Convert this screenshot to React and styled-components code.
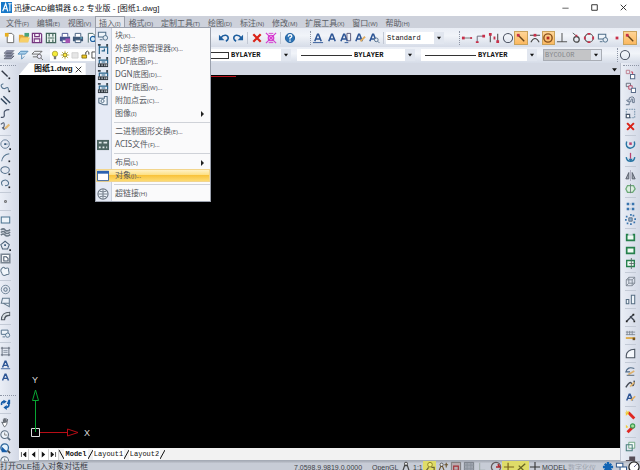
import React from "react";
import styled, { createGlobalStyle, css } from "styled-components";

const Global = createGlobalStyle`
  *, *::before, *::after { box-sizing: border-box; }
  html, body, #root { height: 100%; margin: 0; }
  body {
    overflow: hidden;
    font-family: "Liberation Sans", "Noto Sans CJK SC", sans-serif;
    font-size: 8px;
    color: #3c3f47;
  }
  button, select { font: inherit; color: inherit; border: 0; padding: 0; margin: 0; background: none; }
  svg { display: block; flex: none; }
`;

/* ---------- icon drawings, all on a 13 x 13 grid ---------- */
const N = "#4a5568";
const B = "#1f5f9f";
const R = "#c8304a";
const Y = "#e8b020";
const p = (d, stroke = N, w = 1, fill = "none") => (
  <path d={d} stroke={stroke} strokeWidth={w} fill={fill} />
);
const f = (d, fill) => <path d={d} fill={fill} />;
const c = (x, y, r, stroke = N, fill = "none", w = 1) => (
  <circle cx={x} cy={y} r={r} stroke={stroke} fill={fill} strokeWidth={w} />
);
const dot = (x = 10, y = 10) => f(`M${x - 1} ${y - 1}h2v2h-2z`, "#20242c");
const letterA = (x = 0) => p(`M${3 + x} 10L${6 + x} 2.5h1L${10 + x} 10M${4 + x} 7.5h5`, "#2d5595", 1.7);
const refBox = <>{p("M2.5 12V4.500H6M2.500 2v3M5.500 4.500h6V12M5 8.500h3V6", "#27648c", 1.3)}{f("M1 1h3v2H1zM10 1h2v3h-2z", "#3a4650")}</>;
const dwgRef = <>{p("M2.500 8V4.500H11.500V8M5 6.500h4", "#27648c", 1.3)}{f("M1 1h3v2H1zM10 1h2v3h-2z", "#3a4650")}{f("M1 8h11v4H1z", "#303840")}{p("M2.5 9v2M5.5 9v2M8.5 9v2M10.5 9v2", "#e6eaf0")}</>;
const blockIcon = <>{p("M1.500 2.500h8v5h-8z", "#4d6c88", 1.1, "#eef4fa")}{p("M3 10.500h3", "#4d6c88")}{c(9, 8.5, 2.5, "#4d6c88", "#e2ebf4")}</>;

const drawings = {
  logo: <>{f("M0 0h13v13H0z", "#1677c8")}{p("M2 11L5.5 2L8 11M3 8h4", "#fff", 1.4)}{p("M10.5 2v9M8.5 2h4", "#fff", 1.2)}</>,
  file: <>{p("M3.5 1.5h5l2 2v8h-7z", "#666", 1, "#fff")}{f("M1 1h4v4H1z", Y)}</>,
  open: <>{f("M1 3h4l1 1h5v7H1z", "#e4a83a")}{f("M3 6h10l-2 5H1z", "#f6cf68")}{f("M7 1h5v4H7z", "#48a37b")}</>,
  save: <>{p("M1.5 1.5h9l1 1v9h-10z", "#74357f", 1.3, "#f5eef8")}{p("M4 2v3h5V2M3.5 11V7.5h6V11", "#74357f", 1.2)}</>,
  saveAll: <>{p("M1.5 1.5h10v10h-10z", "#44685d", 1.3, "#eaf2ee")}{p("M3 6.5h7M4.5 2v3M8.5 2v3M4.5 8v3M8.5 8v3", "#44685d", 1.3)}</>,
  print: <>{f("M1 5h11v5H1z", "#405a78")}{p("M3.5 5V1.5h6V5M3.5 8.5h6v3h-6z", "#405a78", 1, "#fff")}{f("M9 6h2v1H9z", "#7de")}</>,
  plot: <>{f("M1 5h11v5H1z", "#44518d")}{p("M3.5 5V1.5h6V5M3.5 8.5h6v3h-6z", "#44518d", 1, "#fff")}{f("M7 7h5v5H7z", "#a354b1")}</>,
  preview: <>{p("M2.5 11.5v-10h5l2 2v2", "#466", 1, "#fff")}{c(7.5, 7.5, 2.8, B, "#d8edfa", 1.3)}{p("M9.5 9.5l3 3", B, 1.8)}</>,
  undo: <>{p("M3 6.5C6 2 11.500 3 11 7Q10.500 9 8.500 10", B, 1.8)}{f("M1 3v6h6z", B)}</>,
  redo: <>{p("M10 6.500C7 2 1.500 3 2 7Q2.500 9 4.500 10", B, 1.8)}{f("M12 3v6H6z", B)}</>,
  cross: p("M2.500 2.500l8 8M10.500 2.500l-8 8", "#d92318", 2.4),
  purge: <>{c(6.5, 6.5, 3, "#d43ccf", "#f2b4f0", 1.3)}{p("M1 1l11 11M12 1L1 12", "#d43ccf", 1.3)}{p("M4 1.500h5M4 11.500h5", "#d43ccf")}</>,
  help: <>{c(6.5, 6.5, 5, "#215f9c", "#2c73b5", 1)}{p("M4.500 5Q5 3 6.500 3Q8.500 3 8.500 4.500Q8.500 5.500 6.500 6.500V8M6.500 9v1.500", "#fff", 1.4)}</>,
  aUnder: <>{letterA()}{p("M1 11.500h11", "#2d5595")}</>,
  a: letterA(),
  aDoc: <>{letterA(-2)}{p("M7.500 8.500v-7h4v8h-3", "#557", 1)}{p("M5 11.500h4", "#2d5595")}</>,
  aEdit: <>{letterA(-1)}{p("M7 10l5-5", "#e0ad62", 2)}</>,
  aFind: <>{letterA(-1)}{c(9, 8.5, 2, "#55708c", "#e7edf5")}{p("M10.500 10l2 2", "#55708c")}</>,
  endSnap: <>{p("M2 6.500h9", "#777")}{f("M1 5h3v3H1z", R)}{f("M10 5.500h2v2h-2z", R)}</>,
  midSnap: <>{p("M3.500 11V4.500H10", "#667")}{f("M9 3h3v3H9zM2 10h3v2H2z", R)}</>,
  twoSnap: <>{p("M2.500 2v9M10.500 2v9", "#555", 1.2)}{f("M1 1h3v3H1zM9 9h3v3H9zM6 5h2v3H6z", R)}</>,
  circle: c(6.5, 6.5, 5, "#4c5363", "none", 1.1),
  nearSnap: <>{p("M3 3l7 7", "#63431a", 1.5)}{f("M2 2h3v3H2z", R)}</>,
  crossSnap: <>{p("M1 3.500h11M2 11Q6.500 3 11 11", "#444", 1.2)}{f("M5 2h3v3H5z", R)}</>,
  centerSnap: <>{c(6.5, 6.5, 4.5, "#87501c", "none", 1.5)}{f("M5 5h3v3H5z", "#b52c22")}</>,
  perp: p("M6.500 1v10M1 10.500h11", "#555", 1.1),
  tangent: <>{c(7, 8, 3, "#444", "none", 1.3)}{p("M3 1l6 5", "#555")}{f("M6 3h2v2H6z", R)}</>,
  quad: <>{c(6.5, 6.5, 4.5, "#555", "none", 1.1)}{f("M5 1h3v2H5zM5 10h3v2H5zM1 5h2v3H1zM10 5h2v3h-2z", R)}</>,
  insert: blockIcon,
  point: f("M5 5h3v3H5z", R),
  layers: <>{f("M4 1h8l-3 3H1zM4 4h8l-3 3H1zM4 7h8l-3 3H1z", "#8a8ea4")}{p("M1 4.500h8l3-3M1 7.500h8l3-3M1 10.500h8l3-3", "#515768")}</>,
  layerBlue: <>{f("M4 2h8L9 6H1z", "#acd3ee")}{p("M4 2.500h8l-3 3H1zM5 6v5l3-3", "#5b8fb8")}</>,
  layerFind: <>{p("M4 2.500h8l-3 3H1zM2 8.500h5", "#666")}{c(9, 8, 2.3, "#666", "#eef")}{p("M11 10l2 2", "#666")}</>,
  bulb: <>{c(6.5, 5, 3.5, "#a49c28", "#f5ec3a")}{f("M5 8h3v4H5z", "#777")}</>,
  sun: <>{p("M6.500 1v11M1 6.500h11M2.500 2.500l8 8M10.500 2.500l-8 8", "#b4a728")}{c(6.5, 6.5, 2.5, "#777020", "#ffe83e")}</>,
  sheet: p("M2.500 3.500h8v7h-8z", "#ccc", 1, "#e6e6e6"),
  unlock: <>{p("M7.500 6V3Q10 0 11.500 3v3", "#333", 1.2)}{p("M2.500 6.500h6v4h-6z", "#75620a", 1, "#f0ca29")}</>,
  swatch: p("M2.500 2.500h8v8h-8z", "#222", 1, "#fff"),
  line: <>{p("M2 2l7 7", "#353b48", 1.7)}{dot(11, 11)}</>,
  arc: <>{p("M4 2Q0 3 2 6T7 7T10 10", "#567590", 1.3)}{dot(11, 11)}</>,
  mline: p("M1 4l7 7M4 1.500l8 8", "#34485f", 1.7),
  spline: p("M1 11Q6 12 5 7T11 2", "#465269", 1.4),
  sketch: <>{p("M1 4Q5 0 5 4T3 8Q5 12 9 6", "#465269", 1.2)}{p("M6 9l5-5", "#e3b874", 2.5)}</>,
  circ: <>{c(6, 6, 5, "#55708c")}{p("M6 6h3", "#55708c")}{f("M5 5h2v2H5z", "#357")}{dot(12, 12)}</>,
  curve: <>{p("M2 11Q3 3 11 2", "#567590", 1.2)}{dot(11, 11)}</>,
  ellipse: <><ellipse cx="6" cy="6" rx="5" ry="4" stroke="#55708c" fill="none" strokeWidth="1.200" />{dot(11, 11)}</>,
  earc: <>{p("M3 9Q0 5 4 3T10 5Q11 9 6 9", "#567590", 1.3)}{dot(11, 11)}</>,
  pt: p("M5.500 5.500h2v2h-2z", "#555"),
  rect: p("M1.500 3.500h10v7h-10z", "#4a7390", 1.2, "#edf4fa"),
  hatch: p("M1 3.500Q4 1 6 3.500T12 3M1 6.500Q4 4 6 6.500T12 6M1 9.500Q4 7 6 9.500T12 9", "#6b7885", 1.9),
  polygon: <>{p("M6 1.500l5 4-2 5H3l-2-5z", "#4c6278", 1.2)}{f("M5 5h2v2H5z", "#357")}{dot(12, 12)}</>,
  region: <>{p("M1.500 1.500h10v10h-10z", "#7a8592", 2, "#fff")}{p("M4.500 9.500V4.500h3l2 2v3z", "#44546a", 1.2)}</>,
  cloud: p("M2 3Q5 0 6 3Q11 1 10 5Q12 11 8 10Q3 13 2 8Q0 5 2 3z", "#63798d", 1.2, "#f1f6fb"),
  donut: <>{c(6.5, 6.5, 5, "#63798d")}{c(6.5, 6.5, 2, "#63798d", "none", 1.2)}</>,
  wedge: p("M3 1.500h8v6H1.500zM4 7.500l7 4v-4", "#63798d", 1.2, "#e8eff7"),
  elbow: <>{p("M3.500 12Q3.500 4.500 12 4.500", "#4d565f", 5)}{p("M3.500 11Q3.500 4.500 11 4.500", "#d9dfe4", 2.5)}</>,
  dotsBox: <>{p("M1 2.500h11M1 10.500h11M2.500 1v11M10.500 1v11", "#56606e")}{p("M4 5.500h5M4 7.500h5", "#7f8a98", 1)}</>,
  refresh: <>{p("M2 7Q1 3 5 3M10 5Q12 9 7 10", "#145ba8", 2)}{f("M4 1l4 2-4 3zM8 7l-4 3 4 3zM10 1h2v5H8z", "#145ba8")}</>,
  hand: p("M2 6l2 1V3l1 4V1.500l1 5 1-5v5l2-4-1 6-2 3H5z", "#5c626b", 1, "#fff"),
  zoom: <>{c(5.5, 5.5, 4.5, "#5b6d7f", "#eef4fa", 1.2)}{p("M9 9l3 3", "#5b6d7f", 2)}{p("M5.500 3v3h3", "#777")}</>,
  zoomBlue: <>{c(5.5, 5.5, 4.5, "#2d669b", "#e6f3fc", 1.5)}{p("M9 9l3 3", "#444", 1.8)}{f("M2 4l7 7H2z", "#145ba8")}</>,
  copy: <>{p("M1.500 1.500h4v4h-4z", "#ba7182")}{p("M6.500 6.500h5v5h-5z", "#596c89", 1.2, "#fff")}{p("M7 3.500h2V6", R)}</>,
  copy2: <>{p("M1.500 1.500h5v4h-5z", "#59606f")}{p("M4.500 4.500h4v4h-4z", "#b9425c", 1.1, "#eef")}{p("M7.500 7.500h5v5h-5z", "#596c89", 1.2, "#fff")}</>,
  offset: p("M1 11.500h4V8Q2 8 2 6H5V3.500Q11 0 11 6v3H9V5Q8 3 7 6v2H5", "#63738a", 1.1),
  scale: <><path d="M1.500 1.500h10v10h-10z" stroke="#6686a0" fill="none" strokeDasharray="2 1" />{p("M1.500 7.500h4v4h-4z", "#475569", 1.3, "#fff")}</>,
  rotate: <>{p("M2 3Q0 10 6 11Q13 10 11 3", "#2a76a4", 1.7)}{f("M5 4h3v3H5z", "#b94270")}</>,
  rotate3: <>{p("M1.500 6Q2 11 6.500 11T11.500 6", "#2a76a4", 1.7)}{p("M6.500 1v7", "#b94270", 1.5)}{f("M4 8h5l-2 4z", "#2a76a4")}</>,
  mirror: <>{p("M6.500 0v13", "#aab")}{p("M4.500 3v7.500H1zM8.500 3v7.500H12z", "#59606d", 1.1, "#a3a9b3")}</>,
  recycle: <>{p("M3 3h7l2 4-3 4H3L1 7z", "#6ca978", 1.5, "#dcefe0")}{p("M6.500 1v11", "#677")}</>,
  array: <>{f("M2 2h3v3H2zM8 2h3v3H8zM2 8h3v3H2zM8 8h3v3H8z", "#3974ae")}{f("M6 3h1v1H6zM6 9h1v1H6z", "#9ab")}</>,
  array2: <>{f("M1 2h2v2H1zM9 1h2v2H9zM2 10h2v2H2zM10 9h2v2h-2zM0 6h2v2H0zM11 5h2v2h-2zM6 0h2v2H6zM6 11h2v2H6z", "#3974ae")}{p("M4.500 4.500h4v4h-4z", "#567", 1, "#8fb2d4")}</>,
  green: p("M2 3h9v7H2z", "#25804c", 2, "#effaf3"),
  greenCut: <>{p("M2 3h9v7H2z", "#25804c", 1.6, "#effaf3")}{p("M7.500 0v13M5 6.500h7", "#566")}</>,
  greenTop: <>{p("M4 3H2v7h9V3H9", "#25804c", 2, "#effaf3")}{p("M4 3.500h5", "#9ab")}</>,
  cube: p("M1.500 4.500h7v7h-7zM4.500 1.500h7v7h-7zM1.500 4.500l3-3M8.500 4.500l3-3M8.500 11.500l3-3M1.500 11.500l3-3", "#79828e", 1),
  stretch: p("M1.500 6.500h3v5h-3zM7.500 1.500h4v10h-4z", "#566d82", 1.2, "#eff5fa"),
  extend: <>{p("M2 11l8-8M6 5l5 5", "#3d4450", 1.6)}{f("M9 2h2v2H9zM10 10h2v2h-2zM1 10h2v2H1z", "#222")}</>,
  measure: <>{p("M1 2.500h11M1 5.500h11M2.500 1v5M5.500 1v5M8.500 1v5", "#7a8490")}{p("M1 9.500h11", "#dca63c", 2)}{f("M9 9h3v3H9z", "#735322")}</>,
  chamfer: p("M1.500 11.500V9Q2 2 11.500 1.500v10z", "#4c5562", 1.3, "#f5f8fc"),
  brush1: <>{p("M11 3Q3 0 1 7h5", "#4e6884", 1.3)}{p("M4 10l7-4", "#ddb16e", 2)}{p("M2 11h9", "#456")}</>,
  brush2: <>{p("M1 10Q6 1 8 6T11 2", "#454b56", 1.7)}{p("M6 9l5-5", "#e3b874", 2)}</>,
  wand: <>{p("M4 3l7 7", "#df2721", 3.4)}{f("M1 0l2 2 2-1-1 3 1 2-2-1-2 2V4L0 3h2z", "#efca35")}</>,
  wand2: <>{p("M10 4l-7 7", "#df2721", 3.4)}{c(9, 3.5, 2.5, "#409c56", "#a5df9a", 1.4)}{f("M1 2l3 3-3 1z", "#efca35")}</>,
  overlap: <>{p("M4.500 1.500h7v7h-7z", "#619f77", 1, "#f5fbf7")}{p("M1.500 4.500h7v7h-7z", "#487c7c", 1.2)}</>,
  solid: f("M5 3h7v8H1V7h4z", "#564d56"),
  block: blockIcon,
  xref: refBox,
  pdf: dwgRef,
  cloudPts: <>{p("M2 3.500h6v-2h3v9H7l-5-2z", "#536c84", 1.1, "#eef4fa")}{c(6, 6.5, 1.7, "#536c84")}</>,
  acis: <>{f("M0 1h13v11H0z", "#4d6562")}{f("M2 3h3v2H2zM7 3h4v2H7zM2 8h2v2H2zM6 8h2v2H6zM10 8h1v2h-1z", "#e1e9e9")}</>,
  windowIcon: <>{p("M.5 1.500h12v10H.5z", "#315c9c", 1, "#fff")}{f("M0 1h13v3H0z", "#2b62b0")}</>,
  globe: <>{c(6.5, 6.5, 5.5, "#6c7784", "#eef4fb", 1.2)}{p("M1.500 6.500h10M6.500 1.500v10M3 3.500Q6.500 5 10 3.500M3 9.500Q6.500 8 10 9.500", "#6c7784")}</>,
  person: <>{c(6.5, 3, 1.7, "#444", "#eee")}{p("M3 11l2-6h3l2 6", "#444", 1.3)}</>,
  personHot: <>{c(6.5, 4, 2.5, "#8a8024", "#f0ec7a")}{p("M2 11l3-4M8 7h3v4", "#6a6432", 1.3)}</>,
  personPlus: <>{c(5, 4, 1.7, "#555", "#eee")}{p("M2 11l2-5h2l2 5M8 4h4M10 2v5", "#6a532d", 1.2)}</>,
  snap: <>{p("M1.500 1.500h10v10h-10z", "#777", 1, "#b9aaae")}{p("M4 5.500h5V10H4z", "#a22e35", 1.2)}</>,
  grid: <>{p("M1.500 1.500h10v10h-10z", "#777d86", 1, "#a0a6b0")}{p("M1 4.500h11M1 8.500h11M4.500 2v10M8.500 2v10", "#8b929c")}</>,
  ortho: p("M4 2v8h6", "#9aa7a3", 1),
  polar: <>{c(6.5, 6.5, 5, "#655b5d", "none", 1.4)}{p("M6.500 6.500h4l-2-3", "#af252c", 1.6)}</>,
  osnap: p("M1 6.500h11M5.500 2v10", "#79641d", 1.3),
  otrack: p("M2 10l8-7M3 5l5 5", "#676424", 1.4),
  plus: p("M1 6.500h11M6.500 1v11", "#333", 1.2),
  gear: <>{p("M6.500 1v11M1 6.500h11M3 3l7 7M10 3l-7 7", "#1365b4", 2.6)}{c(6.5, 6.5, 3, "#1365b4", "#1365b4")}</>,
  windows: p("M1.500 2.500h7v4h-7zM5.500 6.500h7v4h-7z", "#2f5687", 1.1, "#fff"),
  clock: <>{c(6.5, 6.5, 5.5, "#222", "#fff", 1.3)}{p("M6.500 6.500l3-3", "#557")}</>,
  first: p("M3.500 3v7M10 3L6 6.500 10 10z", "#111", 1, "#111"),
  prev: f("M9 2L4 6.500 9 11z", "#111"),
  next: f("M4 2l5 4.500L4 11z", "#111"),
  last: p("M9.500 3v7M3 3l4 3.500L3 10z", "#111", 1, "#111"),
  minimize: p("M2 7.500h9", "#222"),
  maximize: p("M2.500 2.500h8v8h-8z", "#222", 1.3),
  close: p("M2.500 2.500l8 8M10.500 2.500l-8 8", "#222", 1.3),
  down: f("M2 4h9L6.500 10z", "#111"),
};

const Icon = ({ name, size = 13 }) => (
  <svg width={size} height={size} viewBox="0 0 13 13" aria-hidden="true">{drawings[name]}</svg>
);

/* ---------- shell ---------- */
const uiFont = css`font-family: "Noto Sans", "Noto Sans CJK SC", sans-serif;`;

const Shell = styled.div`
  display: grid;
  grid-template-rows: 16px 12px 19px 16px minmax(0, 1fr) 9px;
  height: 100vh;
  background: #d5dae5;
  overflow: hidden;
`;
const TitleBar = styled.header`
  display: flex;
  align-items: center;
  padding: 0 3px 2px 1px;
  gap: 2px;
  background: #fff;
  color: #15171b;
`;
const Title = styled.h1`
  flex: 1;
  margin: 0;
  font-size: 8px;
  font-weight: 400;
`;
const WindowButton = styled.button`
  display: grid;
  place-items: center;
  width: 27px;
  height: 13px;
`;
const MenuBar = styled.nav`
  ${uiFont}
  display: flex;
  padding-left: 2px;
  background: #cdd1db;
  color: #5a5d65;
`;
const MenuEntry = styled.div`
  position: relative;
  display: flex;
`;
const MenuButton = styled.button`
  padding: 0 3px;
  line-height: 11px;
  white-space: nowrap;
  border: 1px solid transparent;
  border-width: 1px 1px 0;
  ${(q) => q.$open && css`background: #e2e4ea; border-color: #9b9fa9;`}
`;
const Key = styled.span`
  font-size: 6px;
`;
const Dropdown = styled.ul`
  position: absolute;
  z-index: 5;
  top: 11px;
  left: 0;
  width: 116px;
  margin: 0;
  padding: 1px 0;
  list-style: none;
  border: 1px solid #9ba1ad;
  background: linear-gradient(90deg, #e5eaf5 15px, #c9d0de 15px, #c9d0de 16px, #fafafb 16px);
`;
const MenuRow = styled.button`
  display: grid;
  grid-template-columns: 18px 1fr 9px;
  align-items: center;
  width: 100%;
  height: 13px;
  padding-left: 1px;
  line-height: 12px;
  text-align: left;
  white-space: nowrap;
  color: #55585e;
  ${(q) => q.$hot && css`
    background: linear-gradient(#fff5d2, #fde084 45%, #f9c33c 50%, #fddf7c);
    box-shadow: inset 0 0 0 1px #f2d58c;
  `}
`;
const MenuSeparator = styled.li`
  height: 5px;
  margin-left: 18px;
  background: linear-gradient(transparent 2px, #cfd2d8 2px, #cfd2d8 3px, transparent 3px);
`;
const SubArrow = styled.span`
  border: 3px solid transparent;
  border-left: 3px solid #222;
  border-right: 0;
  width: 3px;
`;

/* ---------- toolbars ---------- */
const Bar = styled.div`
  display: grid;
  grid-template-columns: ${(q) => q.$columns};
  align-items: center;
  min-width: 0;
  background: linear-gradient(#e9edf5, #f1f4f9 40%, #d6dce8);
`;
const Group = styled.div`
  display: flex;
  align-items: center;
  min-width: 0;
  height: 100%;
  padding: 0 ${(q) => q.$right || 0}px 0 ${(q) => q.$left || 0}px;
`;
const Tool = styled.button`
  display: grid;
  place-items: center;
  flex: ${(q) => (q.$fixed ? "0 0 14px" : "1 1 0")};
  min-width: 0;
  height: 14px;
  ${(q) => q.$active && css`background: linear-gradient(#ffd79a, #fbb65c); box-shadow: inset 0 0 0 1px #c9a25c;`}
`;
const Divider = styled.span`
  flex: none;
  width: 1px;
  height: 12px;
  margin: 0 2px;
  background: #c2c8d4;
`;
const Grip = styled.span`
  flex: none;
  width: 0;
  height: 14px;
  border-left: 1px dotted #8d95a5;
`;
const Combo = styled.label`
  display: flex;
  align-items: center;
  min-width: 0;
  height: 12px;
  margin-right: ${(q) => q.$gap || 0}px;
  padding-left: ${(q) => (q.$sample ? 4 : 1)}px;
  background: ${(q) => (q.$disabled ? "#c4c5c7" : "#fff")};
  color: ${(q) => (q.$disabled ? "#85878b" : "#111")};
  ${(q) => q.$disabled && css`border: 1px solid #a9adb5;`}
`;
const Sample = styled.span`
  flex: none;
  width: ${(q) => (q.$swatch ? "20px" : "51px")};
  height: ${(q) => (q.$swatch ? "7px" : "1px")};
  margin-right: 2px;
  border: 1px solid #333;
  border-width: ${(q) => (q.$swatch ? "1px" : "1px 0 0")};
`;
const Select = styled.select`
  flex: 1;
  min-width: 0;
  height: 12px;
  appearance: none;
  font-family: "Liberation Mono", monospace;
  font-size: 7px;
  font-weight: ${(q) => (q.$strong ? 700 : 400)};
  opacity: 1;
`;
const Caret = styled.span`
  display: grid;
  place-items: center;
  flex: none;
  width: 10px;
  height: 100%;
  background: #e1e6ef;
`;
const LayerState = styled.div`
  display: flex;
  align-items: center;
  height: 12px;
  width: 60px;
  margin-left: 6px;
  background: #fff;
`;

/* ---------- workspace ---------- */
const Workspace = styled.div`
  display: grid;
  grid-template-columns: 19px minmax(0, 1fr) 20px;
  min-height: 0;
`;
const Side = styled.aside`
  display: flex;
  flex-direction: column;
  align-items: ${(q) => (q.$right ? "center" : "flex-start")};
  min-height: 0;
  overflow: hidden;
  padding-top: 2px;
  background: linear-gradient(90deg, #eaeef6, #d3d9e6);
  border-left: ${(q) => (q.$right ? "1px solid #bfc5d1" : "0")};
`;
const SideGrip = styled.span`
  flex: none;
  width: 16px;
  height: 3px;
  margin-top: ${(q) => (q.$gap ? "11px" : "0")};
  border-top: 1px dotted #8d95a5;
`;
const SideTool = styled.button`
  flex: none;
  display: grid;
  place-items: center;
  width: 11px;
  height: 13px;
`;
const SideDivider = styled.span`
  flex: none;
  width: 11px;
  height: 5px;
  background: linear-gradient(transparent 2px, #c3cad6 2px, #c3cad6 3px, transparent 3px);
`;
const Document = styled.main`
  display: grid;
  grid-template-rows: 12px minmax(0, 1fr) 13px;
  min-width: 0;
  min-height: 0;
`;
const DocTabs = styled.div`
  display: flex;
  align-items: stretch;
  justify-content: space-between;
  background: #d4d9e4;
`;
const DocTab = styled.div`
  display: flex;
  align-items: center;
  padding: 0 2px 0 15px;
  background: #fff;
  color: #111;
  font-weight: 700;
  line-height: 12px;
  clip-path: polygon(0 100%, 10px 0, 100% 0, 100% 100%);
`;
const TinyButton = styled.button`
  display: grid;
  place-items: center;
  width: 11px;
  height: 12px;
`;
const Canvas = styled.section`
  display: flex;
  flex-direction: column;
  justify-content: space-between;
  min-height: 0;
  background: #000;
  overflow: hidden;
`;
const Sheets = styled.nav`
  display: flex;
  align-items: center;
  background: #f2f2f2;
  border-bottom: 1px solid #a5abb6;
  color: #111;
  font-family: "Liberation Mono", monospace;
  font-size: 7px;
`;
const PageButton = styled.button`
  display: grid;
  place-items: center;
  width: 10px;
  height: 11px;
  background: #fff;
  border-right: 1px solid #d0d0d0;
`;
const SheetTab = styled.button`
  width: ${(q) => (q.$current ? "24px" : "31px")};
  height: 11px;
  background: #fff;
  font-weight: ${(q) => (q.$current ? 700 : 400)};
`;
const StatusBar = styled.footer`
  display: grid;
  grid-template-columns: 1fr 346px;
  background: linear-gradient(#aeb3bd 1px, #c7ccd6 2px);
  overflow: hidden;
  line-height: 12px;
  white-space: nowrap;
`;
const StatusRight = styled.div`
  display: grid;
  grid-template-columns: 78px 27px 14px 10px repeat(9, 1fr) 26px 33px repeat(3, 13px);
  align-items: start;
  font-size: 7px;
  line-height: 13px;
`;
const StatusTool = styled.button`
  display: grid;
  justify-items: center;
  height: 13px;
  background: ${(q) => (q.$on ? "#dfdc68" : "none")};
`;
const Faded = styled.span`
  color: #a1a6b0;
`;

const menus = [
  ["文件", "F"], ["编辑", "E"], ["视图", "V"], ["插入", "I"], ["格式", "O"], ["定制工具", "T"],
  ["绘图", "D"], ["标注", "N"], ["修改", "M"], ["扩展工具", "X"], ["窗口", "W"], ["帮助", "H"],
];
const insertMenu = [
  ["块", "(K)...", "block"], ["外部参照管理器", "(X)...", "xref"], ["PDF底图", "(P)...", "pdf"],
  ["DGN底图", "(D)...", "pdf"], ["DWF底图", "(W)...", "pdf"], ["附加点云", "(C)...", "cloudPts"],
  ["图像", "(I)", null, "sub"], null,
  ["二进制图形交换", "(E)..."], ["ACIS文件", "(F)...", "acis"], null,
  ["布局", "(L)", null, "sub"], ["对象", "(J)...", "windowIcon", "hot"], null,
  ["超链接", "(H)", "globe"],
];
const leftTools = ["line", "arc", "mline", "spline", "sketch", "|", "circ", "curve", "ellipse", "earc", "|", "pt", "|",
  "rect", "hatch", "polygon", "region", "cloud", "|", "donut", "wedge", "elbow", "|", "insert", "|",
  "dotsBox", "aUnder", "a", "grip", "refresh", "|", "hand", "zoom", "zoomBlue", "zoom"];
const rightTools = ["copy", "copy2", "offset", "scale", "cross", "|", "rotate", "rotate3", "|", "mirror", "recycle", "|",
  "array", "array2", "|", "greenTop", "green", "greenCut", "|", "cube", "|", "stretch", "|", "extend", "|",
  "measure", "|", "chamfer", "|", "brush1", "brush2", "aEdit", "|", "wand", "wand2", "|", "overlap", "solid"];
const snaps = ["endSnap", "midSnap", "twoSnap", "circle", "nearSnap", "crossSnap", "centerSnap", "perp", "tangent", "quad", "insert", "point", "nearSnap"];

const tools = (names, extra = {}) => names.map((n, i) => (
  <Tool key={i} type="button" aria-label={n} {...extra}><Icon name={n} size={12} /></Tool>
));

const SideBar = ({ items, right, label }) => (
  <Side $right={right} aria-label={label}>
    <SideGrip />
    {items.map((n, i) => {
      if (n === "|") return <SideDivider key={i} />;
      if (n === "grip") return <SideGrip key={i} $gap />;
      return <SideTool key={i} type="button" aria-label={n}><Icon name={n} size={11} /></SideTool>;
    })}
  </Side>
);

const PropertyCombo = ({ label, value, sample, swatch, disabled, gap }) => (
  <Combo $sample={sample} $disabled={disabled} $gap={gap}>
    {sample && <Sample $swatch={swatch} />}
    <Select aria-label={label} disabled={disabled} $strong={sample} defaultValue={value}><option>{value}</option></Select>
    <Caret><Icon name="down" size={6} /></Caret>
  </Combo>
);

const Slash = ({ back }) => (
  <svg width="5" height="11" viewBox="0 0 5 11" aria-hidden="true">
    <path d={back ? "M0 1l5 9" : "M5 1L0 10"} stroke="#111" fill="none" />
  </svg>
);

export default function App() {
  return (
    <Shell>
      <Global />
      <TitleBar>
        <Icon name="logo" size={11} />
        <Title>迅捷CAD编辑器 6.2 专业版 - [图纸1.dwg]</Title>
        {["minimize", "maximize", "close"].map((n) => (
          <WindowButton key={n} type="button" aria-label={n}><Icon name={n} size={9} /></WindowButton>
        ))}
      </TitleBar>

      <MenuBar>
        {menus.map(([name, key]) => (
          <MenuEntry key={key}>
            <MenuButton type="button" $open={key === "I"}>{name}<Key>({key})</Key></MenuButton>
            {key === "I" && (
              <Dropdown>
                {insertMenu.map((row, i) => row ? (
                  <li key={i}>
                    <MenuRow type="button" $hot={row[3] === "hot"}>
                      <span>{row[2] && <Icon name={row[2]} size={12} />}</span>
                      <span>{row[0]}<Key>{row[1]}</Key></span>
                      {row[3] === "sub" && <SubArrow />}
                    </MenuRow>
                  </li>
                ) : <MenuSeparator key={i} />)}
              </Dropdown>
            )}
          </MenuEntry>
        ))}
      </MenuBar>

      <Bar $columns="99px 118px 93px 76px 73px minmax(0, 1fr)">
        <Group $left={3}>{tools(["file", "open", "save", "saveAll", "plot", "print", "preview"])}</Group>
        <Group />
        <Group>
          {tools(["undo", "redo"], { $fixed: true })}<Divider />
          {tools(["cross", "purge"], { $fixed: true })}<Divider />
          {tools(["help"], { $fixed: true })}
        </Group>
        <Group><Grip />{tools(["aUnder", "a", "aDoc", "aEdit", "aFind"])}<Divider /></Group>
        <PropertyCombo label="Text style" value="Standard" gap={15} />
        <Group $right={3}>
          <Grip />
          {snaps.map((n, i) => (
            <Tool key={i} type="button" aria-label={n} $active={[4, 6, 12].includes(i)}><Icon name={n} size={12} /></Tool>
          ))}
        </Group>
      </Bar>

      <Bar $columns="205px 92px 124px 122px 74px minmax(0, 1fr)">
        <Group $left={2}>
          {tools(["layers", "layerBlue", "layerFind"], { $fixed: true })}
          <LayerState>
            {["bulb", "sun", "sheet", "unlock", "swatch"].map((n) => <Icon key={n} name={n} size={10} />)}
          </LayerState>
        </Group>
        <PropertyCombo label="Color" value="BYLAYER" sample swatch gap={6} />
        <PropertyCombo label="Line type" value="BYLAYER" sample gap={6} />
        <PropertyCombo label="Line weight" value="BYLAYER" sample gap={6} />
        <PropertyCombo label="Plot style" value="BYCOLOR" disabled gap={15} />
        <Group><Grip />{tools(["circle"], { $fixed: true })}</Group>
      </Bar>

      <Workspace>
        <SideBar items={leftTools} label="Draw" />
        <Document>
          <DocTabs>
            <DocTab>图纸1.dwg<TinyButton type="button" aria-label="Close drawing"><Icon name="close" size={9} /></TinyButton></DocTab>
            <TinyButton type="button" aria-label="Drawing list"><Icon name="down" size={7} /></TinyButton>
          </DocTabs>
          <Canvas aria-label="Model space">
            <svg width="218" height="2" viewBox="0 0 218 2"><path d="M80 1.500h137" stroke="#b5121b" /></svg>
            <svg width="80" height="76" viewBox="0 0 80 76" fill="none">
              <path d="M12.500 56.500h8v8h-8z" stroke="#ddd" />
              <path d="M16.500 60V29M13.500 28.500L16.500 18l3 10.500z" stroke="#08a532" />
              <path d="M21 60.500h27M48.500 57v7L59 60.500z" stroke="#b80d16" />
              <text x="13" y="11" fill="#ddd" fontSize="9">Y</text>
              <text x="65" y="64" fill="#ddd" fontSize="9">X</text>
            </svg>
          </Canvas>
          <Sheets>
            {["first", "prev", "next", "last"].map((n) => (
              <PageButton key={n} type="button" aria-label={n}><Icon name={n} size={9} /></PageButton>
            ))}
            <Slash back />
            <SheetTab type="button" $current>Model</SheetTab><Slash />
            <SheetTab type="button">Layout1</SheetTab><Slash />
            <SheetTab type="button">Layout2</SheetTab><Slash />
          </Sheets>
        </Document>
        <SideBar items={rightTools} right label="Modify" />
      </Workspace>

      <StatusBar>
        <span>打开OLE插入对象对话框</span>
        <StatusRight>
          <span>7.0598,9.9819,0.0000</span>
          <span>OpenGL</span>
          <StatusTool type="button" aria-label="Annotation scale"><Icon name="person" size={12} /></StatusTool>
          <span>1:1</span>
          {["personHot", "personPlus", "snap", "grid", "ortho", "polar", "osnap", "otrack", "plus"].map((n) => (
            <StatusTool key={n} type="button" aria-label={n} $on={["personHot", "osnap", "otrack"].includes(n)}>
              <Icon name={n} size={12} />
            </StatusTool>
          ))}
          <span>MODEL</span>
          <Faded>数字化仪</Faded>
          {["gear", "windows", "clock"].map((n) => (
            <StatusTool key={n} type="button" aria-label={n}><Icon name={n} size={12} /></StatusTool>
          ))}
        </StatusRight>
      </StatusBar>
    </Shell>
  );
}
